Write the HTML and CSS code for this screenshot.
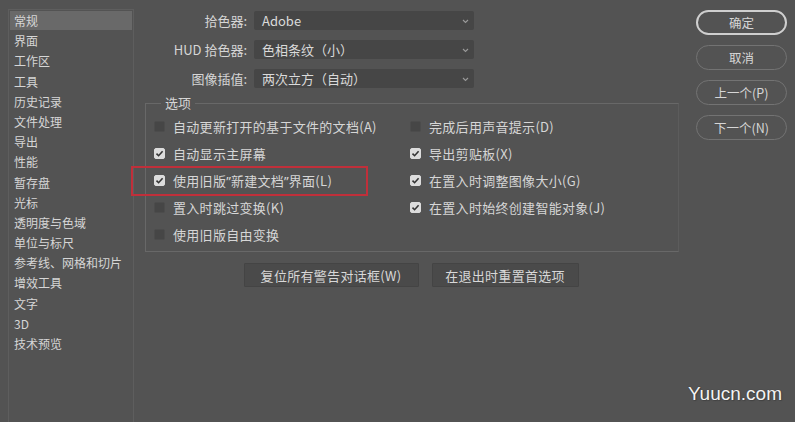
FILE: index.html
```html
<!DOCTYPE html>
<html lang="zh-CN">
<head>
<meta charset="utf-8">
<title>首选项</title>
<link rel="stylesheet" href="styles.css">
</head>
<body>
<div class="dialog">
  <ul class="sidebar">
    <li class="sel">常规</li>
    <li>界面</li>
    <li>工作区</li>
    <li>工具</li>
    <li>历史记录</li>
    <li>文件处理</li>
    <li>导出</li>
    <li>性能</li>
    <li>暂存盘</li>
    <li>光标</li>
    <li>透明度与色域</li>
    <li>单位与标尺</li>
    <li>参考线、网格和切片</li>
    <li>增效工具</li>
    <li>文字</li>
    <li>3D</li>
    <li>技术预览</li>
  </ul>

  <div class="main">
    <div class="form">
      <label class="lbl">拾色器:</label>
      <div class="select"><span>Adobe</span><svg class="chev" width="7" height="5" viewBox="0 0 7 5"><path d="M1 1 L3.5 3.5 L6 1" fill="none" stroke="#9a9a9a" stroke-width="1.1"/></svg></div>
      <label class="lbl">HUD 拾色器:</label>
      <div class="select"><span>色相条纹（小）</span><svg class="chev" width="7" height="5" viewBox="0 0 7 5"><path d="M1 1 L3.5 3.5 L6 1" fill="none" stroke="#9a9a9a" stroke-width="1.1"/></svg></div>
      <label class="lbl">图像插值:</label>
      <div class="select"><span>两次立方（自动）</span><svg class="chev" width="7" height="5" viewBox="0 0 7 5"><path d="M1 1 L3.5 3.5 L6 1" fill="none" stroke="#9a9a9a" stroke-width="1.1"/></svg></div>
    </div>

    <div class="group">
      <span class="legend">选项</span>
      <div class="opts">
        <div class="opt"><span class="cb"></span>自动更新打开的基于文件的文档(A)</div>
        <div class="opt"><span class="cb"></span>完成后用声音提示(D)</div>
        <div class="opt"><span class="cb on"><svg width="11" height="11" viewBox="0 0 11 11"><path d="M2.5 5.6 L4.6 7.7 L8.6 3.3" fill="none" stroke="#333" stroke-width="1.6"/></svg></span>自动显示主屏幕</div>
        <div class="opt"><span class="cb on"><svg width="11" height="11" viewBox="0 0 11 11"><path d="M2.5 5.6 L4.6 7.7 L8.6 3.3" fill="none" stroke="#333" stroke-width="1.6"/></svg></span>导出剪贴板(X)</div>
        <div class="opt"><span class="cb on"><svg width="11" height="11" viewBox="0 0 11 11"><path d="M2.5 5.6 L4.6 7.7 L8.6 3.3" fill="none" stroke="#333" stroke-width="1.6"/></svg></span>使用旧版<span class="q">”</span>新建文档<span class="q">”</span>界面(L)</div>
        <div class="opt"><span class="cb on"><svg width="11" height="11" viewBox="0 0 11 11"><path d="M2.5 5.6 L4.6 7.7 L8.6 3.3" fill="none" stroke="#333" stroke-width="1.6"/></svg></span>在置入时调整图像大小(G)</div>
        <div class="opt"><span class="cb"></span>置入时跳过变换(K)</div>
        <div class="opt"><span class="cb on"><svg width="11" height="11" viewBox="0 0 11 11"><path d="M2.5 5.6 L4.6 7.7 L8.6 3.3" fill="none" stroke="#333" stroke-width="1.6"/></svg></span>在置入时始终创建智能对象(J)</div>
        <div class="opt"><span class="cb"></span>使用旧版自由变换</div>
      </div>
      <div class="highlight"></div>
    </div>

    <div class="actions">
      <button class="btn w1">复位所有警告对话框(W)</button>
      <button class="btn w2">在退出时重置首选项</button>
    </div>
  </div>

  <div class="side-btns">
    <button class="pill primary">确定</button>
    <button class="pill">取消</button>
    <button class="pill">上一个(P)</button>
    <button class="pill">下一个(N)</button>
  </div>
</div>
<div class="watermark">Yuucn.com</div>
</body>
</html>
```

FILE: styles.css
```css
html, body {
  margin: 0;
  padding: 0;
  background: #535353;
  height: 100%;
  overflow: hidden;
}
body {
  font-family: "Noto Sans CJK SC", "Noto Sans", sans-serif;
  color: #d6d6d6;
  position: relative;
}
.dialog {
  display: flex;
  height: 422px;
}
.sidebar {
  list-style: none;
  margin: 9px 0 0 8px;
  padding: 1px;
  width: 122px;
  border: 1px solid #5e5e5e;
  border-bottom: none;
  font-size: 12px;
}
.sidebar li {
  height: 20.2px;
  line-height: 19px;
  padding-left: 4px;
  white-space: nowrap;
}
.sidebar li.sel {
  background: #696969;
  height: 19px;
  margin-bottom: 1.2px;
}
.main {
  width: 546px;
  font-size: 13px;
}
.form {
  display: grid;
  grid-template-columns: 113px 220px;
  column-gap: 7px;
  row-gap: 10px;
  margin-top: 11px;
  align-items: center;
}
.lbl {
  text-align: right;
  white-space: nowrap;
  line-height: 19px;
}
.select {
  height: 19px;
  background: #464646;
  border-radius: 2px;
  display: flex;
  align-items: center;
  justify-content: space-between;
  padding: 0 5px 0 8px;
  color: #dadada;
}
.select span { line-height: 19px; }
.chev { margin-top: 2px; }
.group {
  position: relative;
  margin: 15px 0 0 11px;
  width: 532px;
  height: 147px;
  border: 1px solid #686868;
  border-right-color: #5c5c5c;
}
.legend {
  position: absolute;
  top: -10px;
  left: 15px;
  padding: 0 4px;
  background: #535353;
  line-height: 18px;
}
.opts {
  display: grid;
  grid-template-columns: 256px 1fr;
  grid-auto-rows: 27px;
  padding: 9px 0 0 8px;
}
.opt {
  display: flex;
  align-items: center;
  white-space: nowrap;
  letter-spacing: 0.3px;
}
.q {
  font-family: "Noto Sans", sans-serif;
  letter-spacing: 0;
}
.cb {
  width: 11px;
  height: 11px;
  border-radius: 2px;
  background: #464646;
  border: 1px solid #4c4c4c;
  box-sizing: border-box;
  margin-right: 8px;
  flex: none;
  display: flex;
}
.cb.on {
  background: #dcdcdc;
  border-color: #dcdcdc;
}
.cb.on svg { margin: -1px; }
.highlight {
  position: absolute;
  left: -15px;
  top: 62px;
  width: 233px;
  height: 26px;
  border: 2px solid #c02f3a;
  pointer-events: none;
}
.actions {
  display: flex;
  justify-content: center;
  gap: 13px;
  margin: 11px 0 0 11px;
  width: 532px;
}
.btn {
  font: inherit;
  color: #d8d8d8;
  height: 24px;
  background: #4a4a4a;
  border: 1px solid #444;
  border-radius: 1px;
  padding: 0;
  letter-spacing: 0.3px;
}
.w1 { width: 175px; }
.w2 { width: 147px; }
.side-btns {
  display: flex;
  flex-direction: column;
  gap: 10px;
  padding: 10px 0 0 16px;
}
.pill {
  font: inherit;
  font-size: 12.5px;
  width: 91px;
  height: 25px;
  border-radius: 13px;
  background: #535353;
  color: #d6d6d6;
  border: 1px solid #737373;
  padding: 0;
}
.pill.primary {
  border: 2px solid #cfcfcf;
}
.watermark {
  position: absolute;
  right: 13px;
  bottom: 17px;
  font-family: "Liberation Sans", Arial, sans-serif;
  font-size: 19px;
  color: #f4f4f4;
  text-shadow: 0 0 1px #333, 1px 1px 1px #444;
  line-height: 22px;
}
```
